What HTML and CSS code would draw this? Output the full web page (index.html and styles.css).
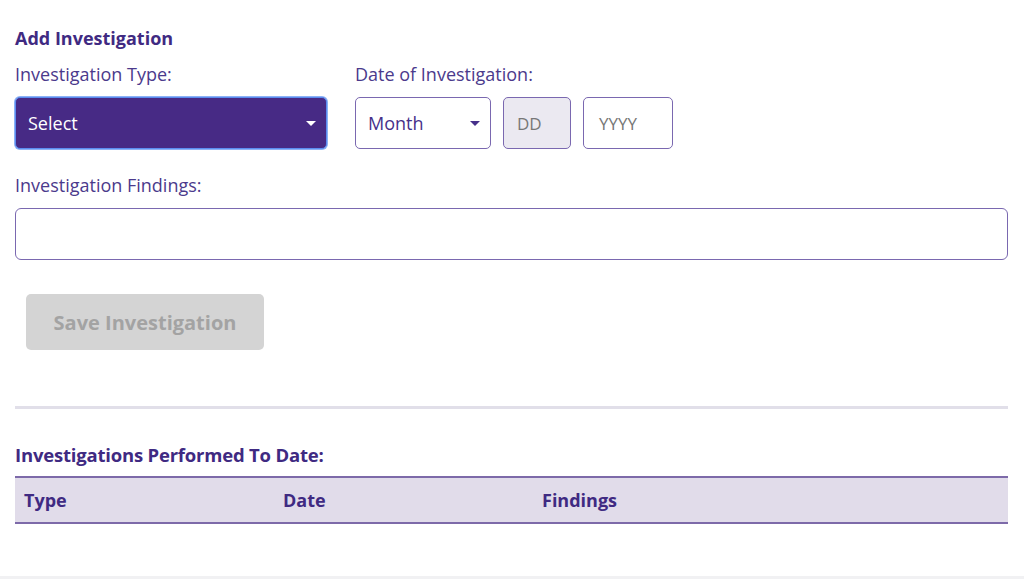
FILE: index.html
```html
<!DOCTYPE html>
<html>
<head>
<meta charset="utf-8">
<link rel="stylesheet" href="styles.css">
</head>
<body>
<div class="page">
  <h2 class="title">Add Investigation</h2>
  <div class="row">
    <div class="field type-field">
      <label class="label">Investigation Type:</label>
      <div class="select select-filled">
        <span>Select</span>
        <span class="caret"></span>
      </div>
    </div>
    <div class="field">
      <label class="label">Date of Investigation:</label>
      <div class="date-row">
        <div class="select select-month">
          <span>Month</span>
          <span class="caret caret-dark"></span>
        </div>
        <div class="box box-dd">DD</div>
        <div class="box box-yyyy">YYYY</div>
      </div>
    </div>
  </div>
  <div class="field findings">
    <label class="label">Investigation Findings:</label>
    <div class="textbox"></div>
  </div>
  <button class="save">Save Investigation</button>
  <hr class="divider">
  <h2 class="title title-2">Investigations Performed To Date:</h2>
  <div class="table-head">
    <div class="col">Type</div>
    <div class="col">Date</div>
    <div class="col">Findings</div>
  </div>
</div>
<div class="footer-line"></div>
</body>
</html>
```

FILE: styles.css
```css
* { box-sizing: border-box; }
html, body { margin: 0; padding: 0; background: #fff; }
body { font-family: "Open Sans", "Noto Sans", sans-serif; color: #46308a; height: 579px; position: relative; overflow: hidden; }
.page { padding: 26px 16px 0 15px; }
.title { margin: 0; font-size: 18px; font-weight: 700; color: #3f2a82; line-height: 24px; }
.row { display: flex; gap: 28px; margin-top: 13px; }
.field { display: flex; flex-direction: column; }
.label { font-size: 18px; color: #4b3a8c; line-height: 22px; margin-bottom: 12px; }
.type-field { width: 312px; }
.select { height: 52px; border-radius: 5px; display: flex; align-items: center; justify-content: space-between; font-size: 18px; padding: 0 10px 0 12px; }
.select-filled { background: #472a85; color: #fff; border: 1px solid #5b8df0; box-shadow: 0 0 0 1px #8db1f5; }
.select-month { width: 136px; border: 1.5px solid #7a68b0; color: #46308a; padding-right: 10px; }
.caret { width: 0; height: 0; border-left: 5px solid transparent; border-right: 5px solid transparent; border-top: 5px solid #fff; }
.caret-dark { border-top-color: #46308a; }
.date-row { display: flex; gap: 12px; }
.box { height: 52px; border: 1.5px solid #7a68b0; border-radius: 5px; display: flex; align-items: center; font-size: 17px; color: #777; }
.box-dd { width: 68px; background: #ebe9f1; padding-left: 13px; }
.box-yyyy { width: 90px; padding-left: 15px; font-size: 17px; }
.findings { margin-top: 25px; }
.textbox { height: 52px; border: 1.5px solid #7a68b0; border-radius: 6px; width: 993px; }
.save { margin: 34px 0 0 11px; width: 238px; height: 56px; border: none; border-radius: 5px; background: #d4d4d4; color: #a3a3a3; font-family: "Open Sans", "Noto Sans", sans-serif; font-weight: 700; font-size: 20px; display: block; }
.divider { margin: 56px 0 0 0; width: 993px; border: none; height: 3px; background: #e1dfe9; }
.title-2 { margin-top: 34px; font-size: 18.5px; letter-spacing: -0.2px; }
.table-head { margin-top: 9px; width: 993px; height: 48px; background: #e1dcea; border-top: 2px solid #7d6aa9; border-bottom: 2px solid #7d6aa9; display: flex; align-items: center; font-weight: 700; font-size: 18px; color: #3f2a82; }
.col { width: 259px; padding-left: 9px; }
.footer-line { position: absolute; left: 0; right: 0; bottom: 0; height: 3px; background: #f1f1f3; }
```
